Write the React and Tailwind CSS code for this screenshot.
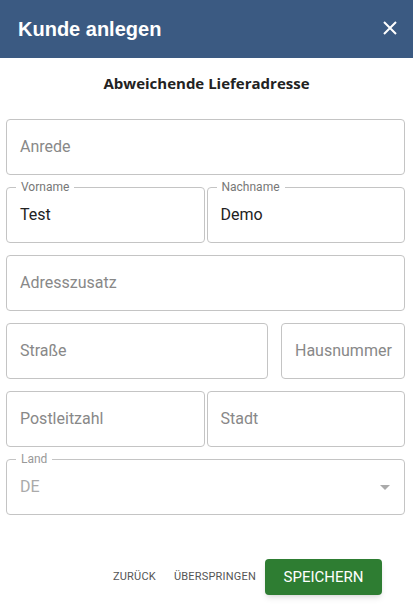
import React from "react";

function Field({ placeholder, label, value, className = "" }) {
  return (
    <div className={"relative h-[56px] rounded-[4px] border border-[#c4c4c4] flex items-center px-[13px] " + className}>
      {label && (
        <span className="absolute -top-[8px] left-[9px] bg-white px-[5px] text-[12px] leading-[14px] text-[#777]">
          {label}
        </span>
      )}
      {value ? (
        <span className="text-[16px] text-[#222]">{value}</span>
      ) : (
        <span className="text-[16px] text-[#888] whitespace-nowrap">{placeholder}</span>
      )}
    </div>
  );
}

export default function App() {
  return (
    <div className="w-[413px] h-[608px] bg-white overflow-hidden" style={{ fontFamily: "Roboto, 'Liberation Sans', sans-serif" }}>
      <header className="h-[58px] bg-[#3b5a82] flex items-center justify-between pl-[18px] pr-[15px]">
        <h1 className="text-white text-[20px] font-bold" style={{ fontFamily: "'Liberation Sans', Arial, sans-serif" }}>
          Kunde anlegen
        </h1>
        <svg width="16" height="16" viewBox="0 0 16 16" className="mb-[3px]">
          <path d="M2 2 L14 14 M14 2 L2 14" stroke="white" strokeWidth="2" />
        </svg>
      </header>

      <h2 className="text-center text-[15px] leading-[20px] font-bold text-[#222] mt-[15px] mb-[26px]" style={{ fontFamily: "'Open Sans', sans-serif" }}>
        Abweichende Lieferadresse
      </h2>

      <div className="pl-[6px] pr-[8px] flex flex-col gap-[12px]">
        <Field placeholder="Anrede" />
        <div className="flex gap-[2px]">
          <Field label="Vorname" value="Test" className="flex-1" />
          <Field label="Nachname" value="Demo" className="flex-1" />
        </div>
        <Field placeholder="Adresszusatz" />
        <div className="flex gap-[13px]">
          <Field placeholder="Straße" className="flex-1" />
          <Field placeholder="Hausnummer" className="w-[124px]" />
        </div>
        <div className="flex gap-[2px]">
          <Field placeholder="Postleitzahl" className="flex-1" />
          <Field placeholder="Stadt" className="flex-1" />
        </div>
        <div className="relative h-[56px] rounded-[4px] border border-[#c4c4c4] flex items-center justify-between pl-[13px] pr-[14px]">
          <span className="absolute -top-[8px] left-[9px] bg-white px-[5px] text-[12px] leading-[14px] text-[#999]">
            Land
          </span>
          <span className="text-[16px] text-[#aaa]">DE</span>
          <svg width="10" height="5" viewBox="0 0 10 5">
            <path d="M0 0 L10 0 L5 5 Z" fill="#aaa" />
          </svg>
        </div>
      </div>

      <div className="flex items-center justify-end pr-[31px] mt-[44px]">
        <button className="mr-[18px] text-[11px] tracking-[0.2px] text-[#555] uppercase">Zurück</button>
        <button className="mr-[9px] text-[11px] tracking-[0.2px] text-[#555] uppercase">Überspringen</button>
        <button className="h-[36px] w-[117px] rounded-[4px] bg-[#2e7d32] text-white text-[15px] uppercase shadow-md">
          Speichern
        </button>
      </div>
    </div>
  );
}
